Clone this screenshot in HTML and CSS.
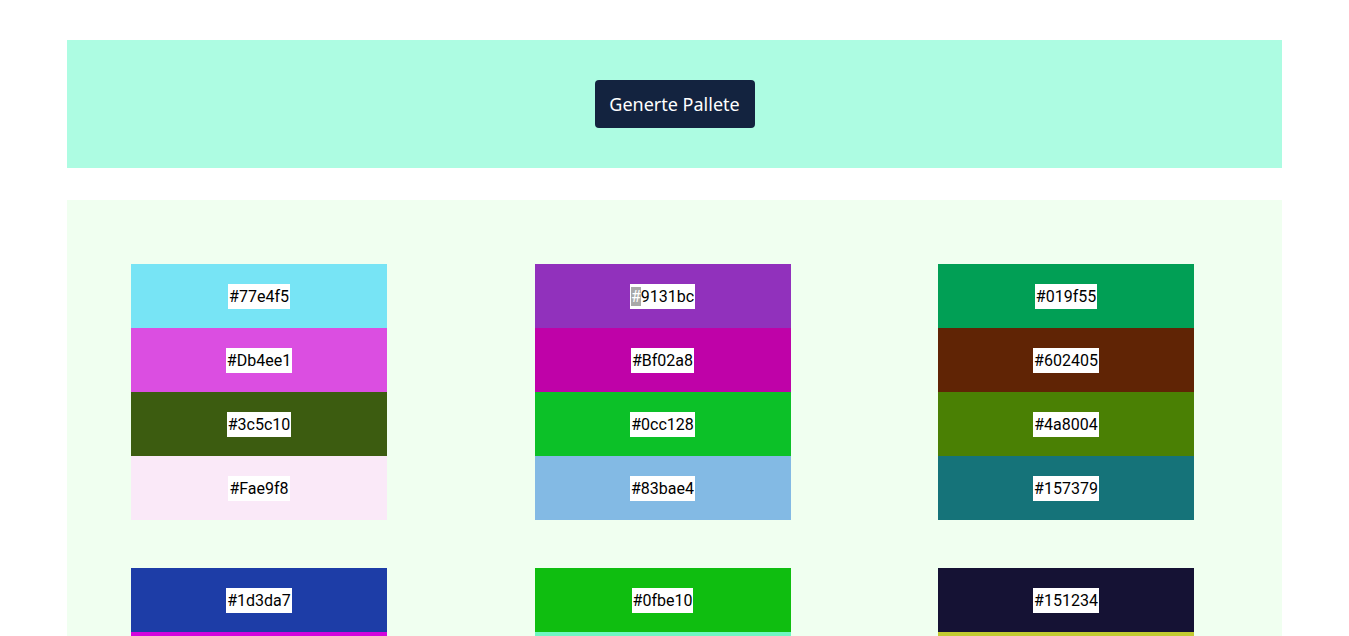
FILE: index.html
```html
<!DOCTYPE html>
<html>
<head>
<meta charset="utf-8">
<link rel="stylesheet" href="styles.css">
</head>
<body>
<div class="header">
  <button class="gen-btn">Generte Pallete</button>
</div>
<div class="palettes">
  <div class="palette">
    <div class="swatch" style="background:#77e4f5"><span class="label">#77e4f5</span></div>
    <div class="swatch" style="background:#db4ee1"><span class="label">#Db4ee1</span></div>
    <div class="swatch" style="background:#3c5c10"><span class="label">#3c5c10</span></div>
    <div class="swatch" style="background:#fae9f8"><span class="label">#Fae9f8</span></div>
  </div>
  <div class="palette">
    <div class="swatch" style="background:#9131bc"><span class="label"><span class="sel">#</span>9131bc</span></div>
    <div class="swatch" style="background:#bf02a8"><span class="label">#Bf02a8</span></div>
    <div class="swatch" style="background:#0cc128"><span class="label">#0cc128</span></div>
    <div class="swatch" style="background:#83bae4"><span class="label">#83bae4</span></div>
  </div>
  <div class="palette">
    <div class="swatch" style="background:#019f55"><span class="label">#019f55</span></div>
    <div class="swatch" style="background:#602405"><span class="label">#602405</span></div>
    <div class="swatch" style="background:#4a8004"><span class="label">#4a8004</span></div>
    <div class="swatch" style="background:#157379"><span class="label">#157379</span></div>
  </div>
  <div class="palette">
    <div class="swatch" style="background:#1d3da7"><span class="label">#1d3da7</span></div>
    <div class="swatch" style="background:#d305dd"><span class="label">#d305dd</span></div>
    <div class="swatch" style="background:#5a2b8e"><span class="label">#5a2b8e</span></div>
    <div class="swatch" style="background:#e8c4a1"><span class="label">#e8c4a1</span></div>
  </div>
  <div class="palette">
    <div class="swatch" style="background:#0fbe10"><span class="label">#0fbe10</span></div>
    <div class="swatch" style="background:#6ff7c2"><span class="label">#6ff7c2</span></div>
    <div class="swatch" style="background:#a31f4d"><span class="label">#a31f4d</span></div>
    <div class="swatch" style="background:#2e6fd0"><span class="label">#2e6fd0</span></div>
  </div>
  <div class="palette">
    <div class="swatch" style="background:#151234"><span class="label">#151234</span></div>
    <div class="swatch" style="background:#c2cb30"><span class="label">#c2cb30</span></div>
    <div class="swatch" style="background:#f07a3c"><span class="label">#f07a3c</span></div>
    <div class="swatch" style="background:#4d9e8a"><span class="label">#4d9e8a</span></div>
  </div>
</div>
</body>
</html>
```

FILE: styles.css
```css
html, body {
  margin: 0;
  padding: 0;
  background: #ffffff;
}

body {
  font-family: Roboto, "Liberation Sans", sans-serif;
}

.header {
  width: 1215px;
  height: 128px;
  margin: 40px auto 0;
  background: #adfce2;
  display: flex;
  align-items: center;
  justify-content: center;
}

.gen-btn {
  width: 160px;
  height: 48px;
  border: none;
  border-radius: 4px;
  background: #13233f;
  color: #ffffff;
  font-family: "Noto Sans", "Open Sans", sans-serif;
  font-size: 18px;
  padding: 0;
  cursor: pointer;
}

.palettes {
  width: 1215px;
  box-sizing: border-box;
  margin: 32px auto 0;
  background: #f0fff0;
  padding: 64px 88px 64px 64px;
  display: grid;
  grid-template-columns: repeat(3, 256px);
  justify-content: space-between;
  row-gap: 48px;
}

.palette {
  display: flex;
  flex-direction: column;
}

.swatch {
  height: 64px;
  display: flex;
  align-items: center;
  justify-content: center;
}

.label {
  display: inline-block;
  background: #ffffff;
  color: #000000;
  font-size: 16px;
  line-height: 19px;
  padding: 3px 1px;
}

.sel {
  background: #a9a9a9;
  color: #ffffff;
}
```
